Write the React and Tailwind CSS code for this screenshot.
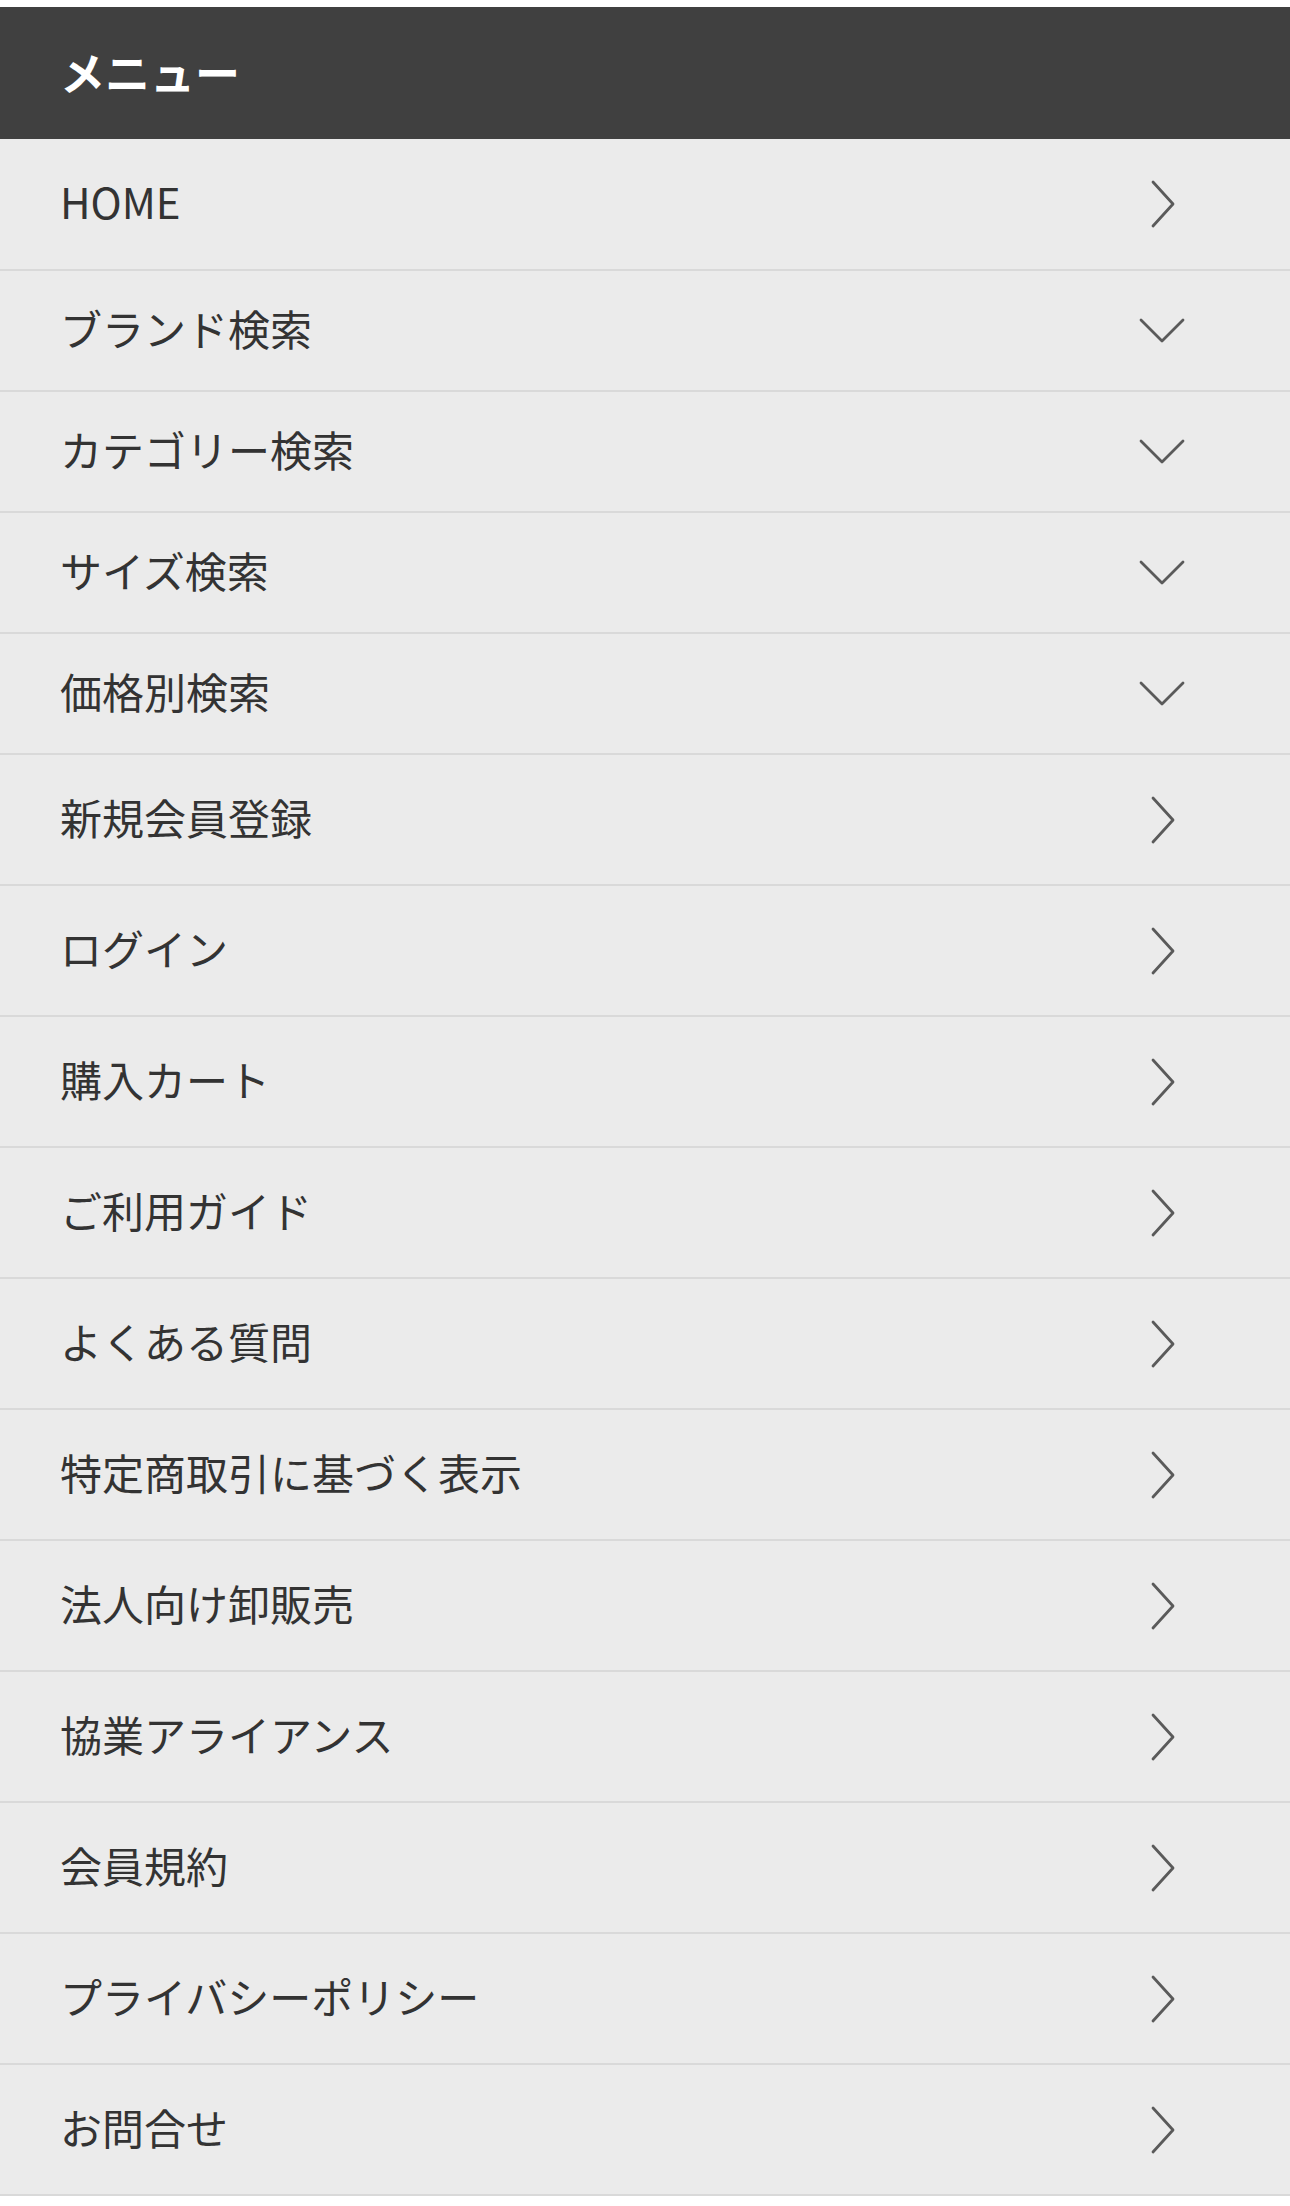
import React from 'react';

const items = [
  { label: 'HOME', type: 'link' },
  { label: 'ブランド検索', type: 'drop' },
  { label: 'カテゴリー検索', type: 'drop' },
  { label: 'サイズ検索', type: 'drop' },
  { label: '価格別検索', type: 'drop' },
  { label: '新規会員登録', type: 'link' },
  { label: 'ログイン', type: 'link' },
  { label: '購入カート', type: 'link' },
  { label: 'ご利用ガイド', type: 'link' },
  { label: 'よくある質問', type: 'link' },
  { label: '特定商取引に基づく表示', type: 'link' },
  { label: '法人向け卸販売', type: 'link' },
  { label: '協業アライアンス', type: 'link' },
  { label: '会員規約', type: 'link' },
  { label: 'プライバシーポリシー', type: 'link' },
  { label: 'お問合せ', type: 'link' },
];

const ChevronRight = () => (
  <svg width="26" height="48" viewBox="0 0 26 48" fill="none" stroke="#5a5a5a" strokeWidth="2.8" strokeLinecap="round" strokeLinejoin="round">
    <path d="M3 2 L23 24 L3 46" />
  </svg>
);

const ChevronDown = () => (
  <svg width="46" height="28" viewBox="0 0 46 28" fill="none" stroke="#5a5a5a" strokeWidth="2.8" strokeLinecap="round" strokeLinejoin="round">
    <path d="M2 3 L23 24 L44 3" />
  </svg>
);

const App = () => {
  return (
    <div className="w-[1290px] bg-white pt-[7px]" style={{ fontFamily: '"Noto Sans CJK JP", "Noto Sans", sans-serif' }}>
      <div className="h-[132px] bg-[#404040] flex items-center pl-[60px]">
        <h2 className="text-white text-[45px] font-bold leading-none -mt-[4px]">メニュー</h2>
      </div>
      <ul>
        {items.map((item, index) => (
          <li
            key={index}
            className={
              'flex items-center justify-between bg-[#ebebeb] border-b-2 border-[#d9d9d9] pl-[60px] ' +
              (item.type === 'drop' ? 'h-[121px] pr-[105px]' : index === 0 ? 'h-[132px] pr-[114px]' : 'h-[131px] pr-[114px]')
            }
          >
            <span className="text-[42px] text-[#333] leading-none -mt-[6px]">{item.label}</span>
            {item.type === 'drop' ? <ChevronDown /> : <ChevronRight />}
          </li>
        ))}
      </ul>
    </div>
  );
};

export default App;
